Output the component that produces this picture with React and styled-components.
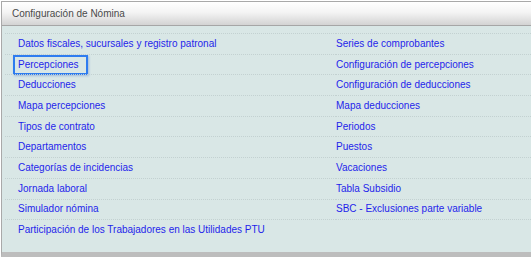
import React from "react";
import styled, { createGlobalStyle } from "styled-components";

const GlobalStyle = createGlobalStyle`
  html, body {
    margin: 0;
    padding: 0;
    background: #ffffff;
    overflow: hidden;
  }
  body {
    font-family: "Liberation Sans", Arial, sans-serif;
  }
`;

export const Panel = styled.div`
  margin: 1px 0 0 1px;
  width: 545px;
  border-top: 1px solid #a9a9a9;
  border-left: 1px solid #a9a9a9;
  border-bottom: 5px solid #bdbdbd;
  background: #d9e7e6;
`;

export const Header = styled.div`
  height: 23px;
  display: flex;
  align-items: center;
  padding-left: 10px;
  font-size: 10px;
  color: #4a4a4a;
  background: linear-gradient(to bottom, #ffffff 0%, #f4f4f4 45%, #d3d3d3 100%);
  border-bottom: 1px solid #a6a6a6;
`;

export const Body = styled.div`
  height: 226px;
  padding: 7px 0 0 3px;
  box-sizing: border-box;
`;

export const Grid = styled.div`
  display: grid;
  grid-template-columns: 331px 1fr;
`;

export const Cell = styled.div`
  height: 20.7px;
  box-sizing: border-box;
  display: flex;
  align-items: center;
  padding-left: ${(p) => (p.$left ? "13px" : "0")};
  border-top: 1px dotted #c3d1d1;
`;

export const Link = styled.a`
  font-size: 10px;
  color: #1f1feb;
  text-decoration: none;
  cursor: pointer;
  display: inline-block;
  line-height: 14px;
  ${(p) =>
    p.$focused &&
    `
    padding: 1px 7px 1px 3px;
    margin-left: -3px;
    box-shadow: 0 0 0 2px #2e7cf0, 1px 1px 2px 2px rgba(60, 110, 200, 0.35);
  `}
`;

const left = [
  "Datos fiscales, sucursales y registro patronal",
  "Percepciones",
  "Deducciones",
  "Mapa percepciones",
  "Tipos de contrato",
  "Departamentos",
  "Categorías de incidencias",
  "Jornada laboral",
  "Simulador nómina",
  "Participación de los Trabajadores en las Utilidades PTU",
];

const right = [
  "Series de comprobantes",
  "Configuración de percepciones",
  "Configuración de deducciones",
  "Mapa deducciones",
  "Periodos",
  "Puestos",
  "Vacaciones",
  "Tabla Subsidio",
  "SBC - Exclusiones parte variable",
  "",
];

export default function App() {
  return (
    <>
      <GlobalStyle />
      <Panel>
        <Header>Configuración de Nómina</Header>
        <Body>
          <Grid>
            {left.map((item, i) => (
              <React.Fragment key={i}>
                <Cell $left>
                  <Link $focused={item === "Percepciones"}>{item}</Link>
                </Cell>
                <Cell>{right[i] && <Link>{right[i]}</Link>}</Cell>
              </React.Fragment>
            ))}
          </Grid>
        </Body>
      </Panel>
    </>
  );
}
